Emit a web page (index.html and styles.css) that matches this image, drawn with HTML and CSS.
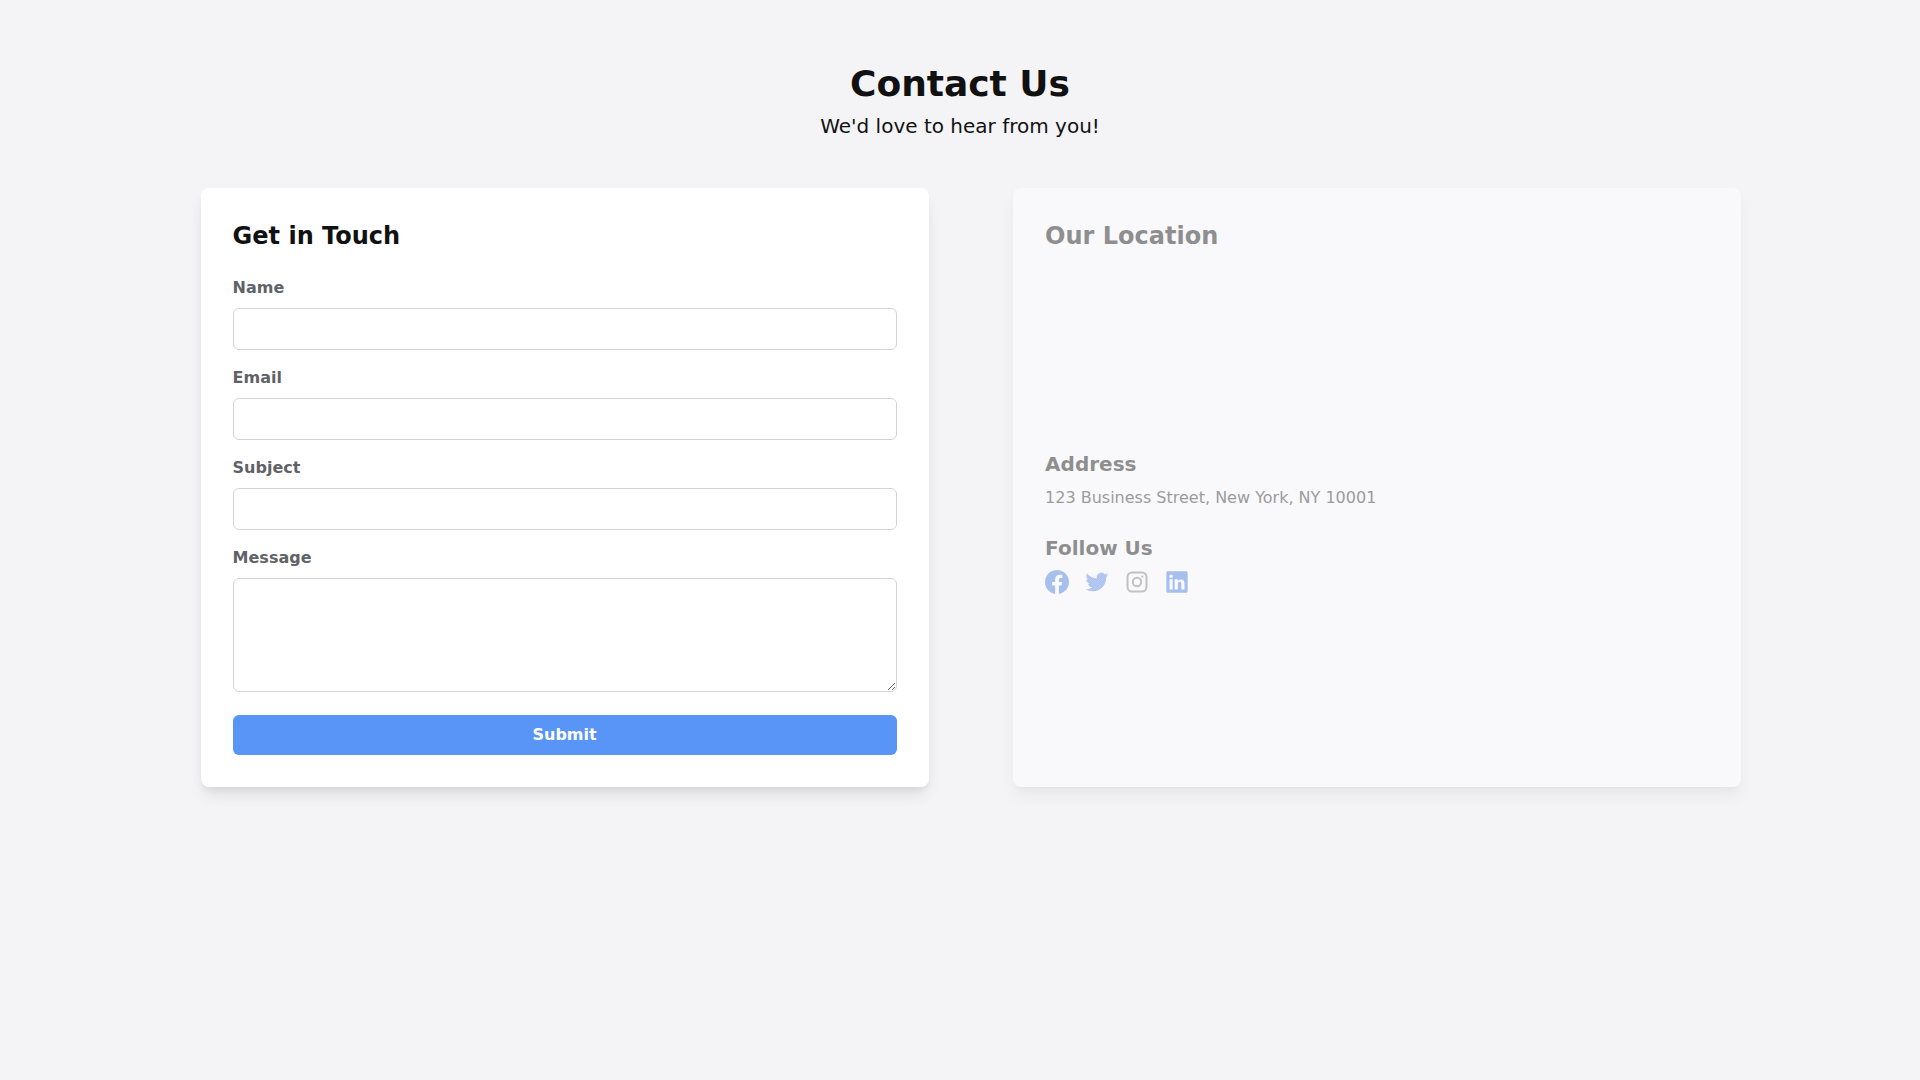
FILE: index.html
```html
<!DOCTYPE html>
<html lang="en">
<head>
  <meta charset="UTF-8">
  <title>Contact Us</title>
  <link rel="stylesheet" href="styles.css">
</head>
<body>
  <header class="page-head">
    <h1>Contact Us</h1>
    <p>We'd love to hear from you!</p>
  </header>

  <main class="columns">
    <section class="card">
      <h2>Get in Touch</h2>
      <form class="contact-form">
        <div class="field">
          <label for="name">Name</label>
          <input id="name" type="text">
        </div>
        <div class="field">
          <label for="email">Email</label>
          <input id="email" type="email">
        </div>
        <div class="field">
          <label for="subject">Subject</label>
          <input id="subject" type="text">
        </div>
        <div class="field">
          <label for="message">Message</label>
          <textarea id="message" rows="4"></textarea>
        </div>
        <button type="button">Submit</button>
      </form>
    </section>

    <section class="card card-faded">
      <h2>Our Location</h2>
      <div class="map"></div>
      <h3>Address</h3>
      <p class="address">123 Business Street, New York, NY 10001</p>
      <h3 class="follow">Follow Us</h3>
      <div class="socials">
        <a href="#" class="social-blue" aria-label="Facebook">
          <svg viewBox="0 0 24 24" width="24" height="24"><path d="M24 12.07C24 5.4 18.63 0 12 0S0 5.4 0 12.07c0 6.03 4.39 11.02 10.13 11.93v-8.44H7.08v-3.49h3.05V9.41c0-3.02 1.79-4.69 4.53-4.69 1.31 0 2.69.24 2.69.24v2.97h-1.52c-1.49 0-1.96.93-1.96 1.89v2.25h3.33l-.53 3.49h-2.8V24C19.61 23.09 24 18.1 24 12.07z"/></svg>
        </a>
        <a href="#" class="social-blue" aria-label="Twitter">
          <svg viewBox="-0.5 -0.5 25 25" width="24" height="24">
            <defs>
              <pattern id="speckle" width="2" height="2" patternUnits="userSpaceOnUse">
                <rect width="2" height="2" fill="#5b8ce8" fill-opacity="0.75"/>
                <rect width="1" height="1" fill="#5b8ce8"/>
                <rect x="1" y="1" width="1" height="1" fill="#5b8ce8"/>
              </pattern>
            </defs>
            <path fill="url(#speckle)" d="M23.95 4.57a10 10 0 0 1-2.82.77 4.96 4.96 0 0 0 2.16-2.72c-.95.55-2 .96-3.13 1.19a4.92 4.92 0 0 0-8.38 4.48C7.69 8.1 4.07 6.13 1.64 3.16a4.82 4.82 0 0 0-.67 2.48c0 1.71.87 3.21 2.19 4.1a4.9 4.9 0 0 1-2.23-.62v.06a4.92 4.92 0 0 0 3.95 4.83 5 5 0 0 1-2.21.08 4.94 4.94 0 0 0 4.6 3.42 9.87 9.87 0 0 1-6.1 2.1c-.39 0-.78-.02-1.17-.07a13.9 13.9 0 0 0 7.55 2.21c9.05 0 14-7.5 14-13.98 0-.21 0-.42-.02-.63a9.94 9.94 0 0 0 2.42-2.57z"/>
          </svg>
        </a>
        <a href="#" class="social-gray" aria-label="Instagram">
          <svg viewBox="0 0 24 24" width="24" height="24"><rect x="2.5" y="2.5" width="19" height="19" rx="4.5" fill="none" stroke="currentColor" stroke-width="2"/><circle cx="12" cy="12" r="4.2" fill="none" stroke="currentColor" stroke-width="2"/><circle cx="17.4" cy="6.6" r="1.1"/></svg>
        </a>
        <a href="#" class="social-blue" aria-label="LinkedIn">
          <svg viewBox="-1.5 -1.5 27 27" width="24" height="24"><path fill-rule="evenodd" d="M1.77 0h20.46C23.2 0 24 .77 24 1.73v20.54c0 .96-.8 1.73-1.77 1.73H1.77C.8 24 0 23.23 0 22.27V1.73C0 .77.8 0 1.77 0zM3.56 9v11.45h3.55V9H3.560zM5.34 3.5a2.06 2.06 0 1 0 0 4.12 2.06 2.06 0 0 0 0-4.12zM9.35 9v11.45h3.55v-5.66c0-1.5.29-2.95 2.14-2.95 1.83 0 1.86 1.71 1.86 3.04v5.57h3.55v-5.87c0-3.07-.66-5.43-4.24-5.43-1.72 0-2.88.94-3.35 1.84h-.05V9H9.350z"/></svg>
        </a>
      </div>
    </section>
  </main>
</body>
</html>
```

FILE: styles.css
```css
* {
  box-sizing: border-box;
}

body {
  margin: 0;
  min-height: 100vh;
  font-family: "DejaVu Sans", sans-serif;
  background-color: #f4f4f7;
  color: #111111;
}

.page-head {
  padding-top: 64px;
  text-align: center;
}

.page-head h1 {
  margin: 0;
  font-size: 36px;
  line-height: 40px;
  font-weight: 700;
}

.page-head p {
  margin: 8px 0 0;
  font-size: 20px;
  line-height: 28px;
}

.columns {
  display: grid;
  grid-template-columns: 728px 728px;
  gap: 84.5px;
  margin: 48px 0 0 200.6px;
}

.card {
  padding: 32px;
  background: #ffffff;
  border-radius: 8px;
  box-shadow: 0 10px 15px -3px rgba(0, 0, 0, 0.1), 0 4px 6px -2px rgba(0, 0, 0, 0.05);
}

.card-faded {
  opacity: 0.5;
  color: #2a2a2a;
  background: #fefdff;
}

.card h2 {
  margin: 0 0 24px;
  font-size: 24px;
  line-height: 32px;
  font-weight: 700;
}

.field {
  margin-bottom: 16px;
}

.field label {
  display: block;
  margin-bottom: 8px;
  font-size: 16px;
  line-height: 24px;
  font-weight: 700;
  color: #5f6368;
}

.field input,
.field textarea {
  display: block;
  width: 100%;
  padding: 8px 16px;
  font-family: inherit;
  font-size: 16px;
  background: #ffffff;
  border: 1px solid #d1d5db;
  border-radius: 6px;
}

.field input {
  height: 42px;
}

.field textarea {
  height: 114px;
}

.contact-form button {
  display: block;
  width: 100%;
  height: 40px;
  margin-top: 23px;
  padding: 0 0 2px;
  font-family: inherit;
  font-size: 16px;
  font-weight: 700;
  color: #ffffff;
  background: #5895f7;
  border: none;
  border-radius: 6px;
}

.map {
  height: 150px;
  margin-bottom: 24px;
}

.card h3 {
  margin: 0 0 8px;
  font-size: 20px;
  line-height: 28px;
  font-weight: 700;
}

.address {
  margin: 0;
  font-size: 16px;
  line-height: 24px;
  color: #444444;
}

.card h3.follow {
  margin-top: 24px;
}

.socials {
  display: flex;
  gap: 16px;
}

.socials a {
  display: block;
  height: 24px;
}

.socials svg {
  display: block;
  fill: currentColor;
}

.social-blue {
  color: #5b8ce8;
}

.social-gray {
  color: #909090;
}
```
